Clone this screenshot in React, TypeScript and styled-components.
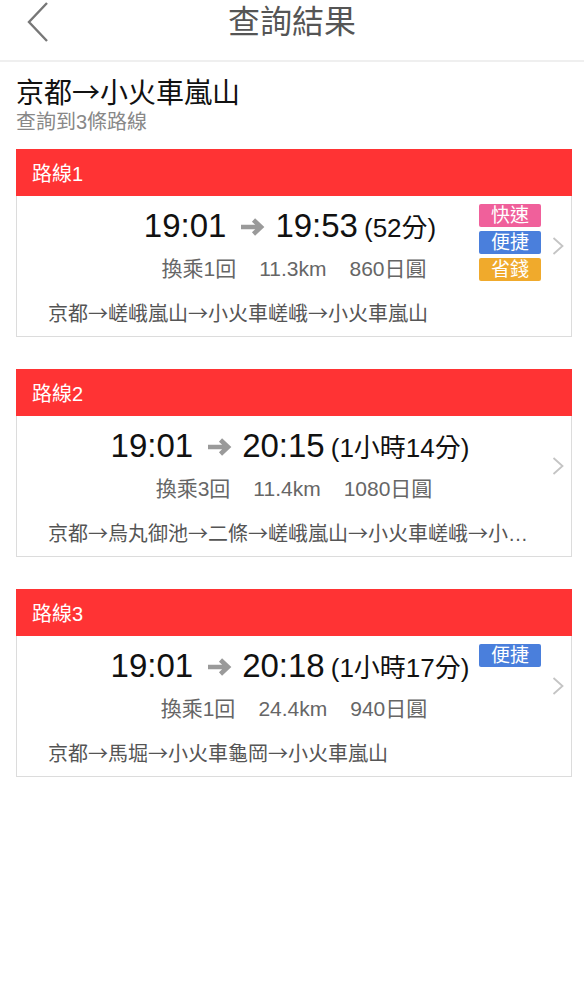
import styled, { createGlobalStyle } from 'styled-components';

const GlobalStyle = createGlobalStyle`
  html, body {
    margin: 0;
    padding: 0;
    background: #ffffff;
  }
  body {
    font-family: "Liberation Sans", "Noto Sans CJK TC", sans-serif;
    color: #111;
  }
`;

const cjkFirst = `"Noto Sans CJK TC", "Liberation Sans", sans-serif`;

type Tag = 'fast' | 'easy' | 'cheap';

const tagColors: Record<Tag, string> = {
  fast: '#f0609b',
  easy: '#4a7fdc',
  cheap: '#f0aa2c',
};

const tagLabels: Record<Tag, string> = {
  fast: '快速',
  easy: '便捷',
  cheap: '省錢',
};

const routes = [
  {
    name: '路線1',
    from: '19:01',
    to: '19:53',
    duration: '(52分)',
    transfers: '換乘1回',
    distance: '11.3km',
    fare: '860日圓',
    stations: ['京都', '嵯峨嵐山', '小火車嵯峨', '小火車嵐山'],
    tags: ['fast', 'easy', 'cheap'] as Tag[],
  },
  {
    name: '路線2',
    from: '19:01',
    to: '20:15',
    duration: '(1小時14分)',
    transfers: '換乘3回',
    distance: '11.4km',
    fare: '1080日圓',
    stations: ['京都', '烏丸御池', '二條', '嵯峨嵐山', '小火車嵯峨', '小火車嵐山'],
    tags: [] as Tag[],
  },
  {
    name: '路線3',
    from: '19:01',
    to: '20:18',
    duration: '(1小時17分)',
    transfers: '換乘1回',
    distance: '24.4km',
    fare: '940日圓',
    stations: ['京都', '馬堀', '小火車龜岡', '小火車嵐山'],
    tags: ['easy'] as Tag[],
  },
];

const Page = styled.div`
  width: 584px;
  min-height: 1000px;
  background: #fff;
`;

const NavBar = styled.div`
  height: 62px;
  display: grid;
  grid-template-columns: 80px 1fr 80px;
  align-items: center;
  border-bottom: 2px solid #efefef;
  box-sizing: border-box;
`;

const BackButton = styled.div`
  display: flex;
  align-items: center;
  padding-left: 27px;
  height: 100%;
  padding-bottom: 16px;
  box-sizing: border-box;
`;

const NavTitle = styled.div`
  text-align: center;
  font-size: 32px;
  color: #555;
  line-height: 40px;
  padding-bottom: 16px;
`;

const Summary = styled.div`
  padding: 12px 16px 0;
`;

const SummaryTitle = styled.div`
  font-family: ${cjkFirst};
  font-size: 28px;
  line-height: 34px;
  color: #111;
`;

const SummaryCount = styled.div`
  font-size: 20px;
  line-height: 26px;
  color: #888;
  margin-top: 1px;
`;

const CardList = styled.div`
  display: flex;
  flex-direction: column;
  gap: 32px;
  padding: 14px 12px 0 16px;
`;

const Card = styled.div`
  border: 1px solid #dcdcdc;
  border-top: 0;
  background: #fff;
`;

const CardHeader = styled.div`
  height: 47px;
  background: #ff3334;
  color: #fff;
  font-size: 20px;
  display: flex;
  align-items: center;
  padding-left: 16px;
  margin: 0 -1px;
`;

const CardBody = styled.div`
  padding-bottom: 8px;
`;

const TopRow = styled.div`
  display: grid;
  grid-template-columns: 96px minmax(0, 1fr) 96px;
  padding-top: 8px;
`;

const Main = styled.div`
  grid-column: 2;
  display: flex;
  flex-direction: column;
  align-items: center;
`;

const TimeLine = styled.div`
  display: flex;
  align-items: baseline;
  justify-content: center;
  white-space: nowrap;
  height: 44px;
  line-height: 44px;
  color: #111;
  margin-left: -8px;
`;

const Time = styled.span`
  font-size: 33px;
`;

const Arrow = styled.svg`
  width: 25px;
  height: 18px;
  margin: 0 10px 0 14px;
  align-self: center;
  position: relative;
  top: 1px;
`;

const Duration = styled.span`
  font-size: 26px;
  margin-left: 6px;
`;

const Details = styled.div`
  display: flex;
  gap: 23px;
  margin-top: 6px;
  font-size: 21px;
  line-height: 30px;
  color: #666;
  white-space: nowrap;
`;

const Side = styled.div`
  grid-column: 3;
  display: flex;
  padding-left: 4px;
  padding-right: 7px;
`;

const TagColumn = styled.div`
  display: flex;
  flex-direction: column;
  gap: 4px;
  align-self: flex-start;
  width: 62px;
`;

const TagBadge = styled.div<{ $color: string }>`
  height: 23px;
  line-height: 23px;
  border-radius: 2px;
  background: ${(p) => p.$color};
  color: #fff;
  font-size: 19px;
  text-align: center;
`;

const Chevron = styled.svg`
  margin-left: auto;
  align-self: center;
  width: 12px;
  height: 18px;
  position: relative;
  top: 2px;
`;

const Stations = styled.div`
  margin-top: 15px;
  padding: 0 31px;
  font-size: 20px;
  line-height: 28px;
  color: #555;
  white-space: nowrap;
  overflow: hidden;
  text-overflow: ellipsis;
`;

const Station = styled.span`
  font-family: ${cjkFirst};
`;

const Sep = styled.span`
  font-family: ${cjkFirst};
`;

function BackIcon() {
  return (
    <svg width="22" height="40" viewBox="0 0 22 40">
      <path d="M20 1 L2 20 L20 39" fill="none" stroke="#777" strokeWidth="2.4" />
    </svg>
  );
}

export default function App() {
  return (
    <>
      <GlobalStyle />
      <Page>
        <NavBar>
          <BackButton>
            <BackIcon />
          </BackButton>
          <NavTitle>查詢結果</NavTitle>
          <div />
        </NavBar>
        <Summary>
          <SummaryTitle>京都→小火車嵐山</SummaryTitle>
          <SummaryCount>查詢到3條路線</SummaryCount>
        </Summary>
        <CardList>
          {routes.map((r) => (
            <Card key={r.name}>
              <CardHeader>{r.name}</CardHeader>
              <CardBody>
                <TopRow>
                  <Main>
                    <TimeLine>
                      <Time>{r.from}</Time>
                      <Arrow viewBox="0 0 25 18">
                        <path
                          d="M1 9 H21 M13.5 2 L21 9 L13.5 16"
                          fill="none"
                          stroke="#9a9a9a"
                          strokeWidth="4.6"
                        />
                      </Arrow>
                      <Time>{r.to}</Time>
                      <Duration>{r.duration}</Duration>
                    </TimeLine>
                    <Details>
                      <span>{r.transfers}</span>
                      <span>{r.distance}</span>
                      <span>{r.fare}</span>
                    </Details>
                  </Main>
                  <Side>
                    <TagColumn>
                      {r.tags.map((t) => (
                        <TagBadge key={t} $color={tagColors[t]}>
                          {tagLabels[t]}
                        </TagBadge>
                      ))}
                    </TagColumn>
                    <Chevron viewBox="0 0 12 18">
                      <path d="M1.5 1 L10.5 9 L1.5 17" fill="none" stroke="#c4c4c4" strokeWidth="1.8" />
                    </Chevron>
                  </Side>
                </TopRow>
                <Stations>
                  {r.stations.map((s, i) => (
                    <span key={s}>
                      {i > 0 && <Sep>→</Sep>}
                      <Station>{s}</Station>
                    </span>
                  ))}
                </Stations>
              </CardBody>
            </Card>
          ))}
        </CardList>
      </Page>
    </>
  );
}
